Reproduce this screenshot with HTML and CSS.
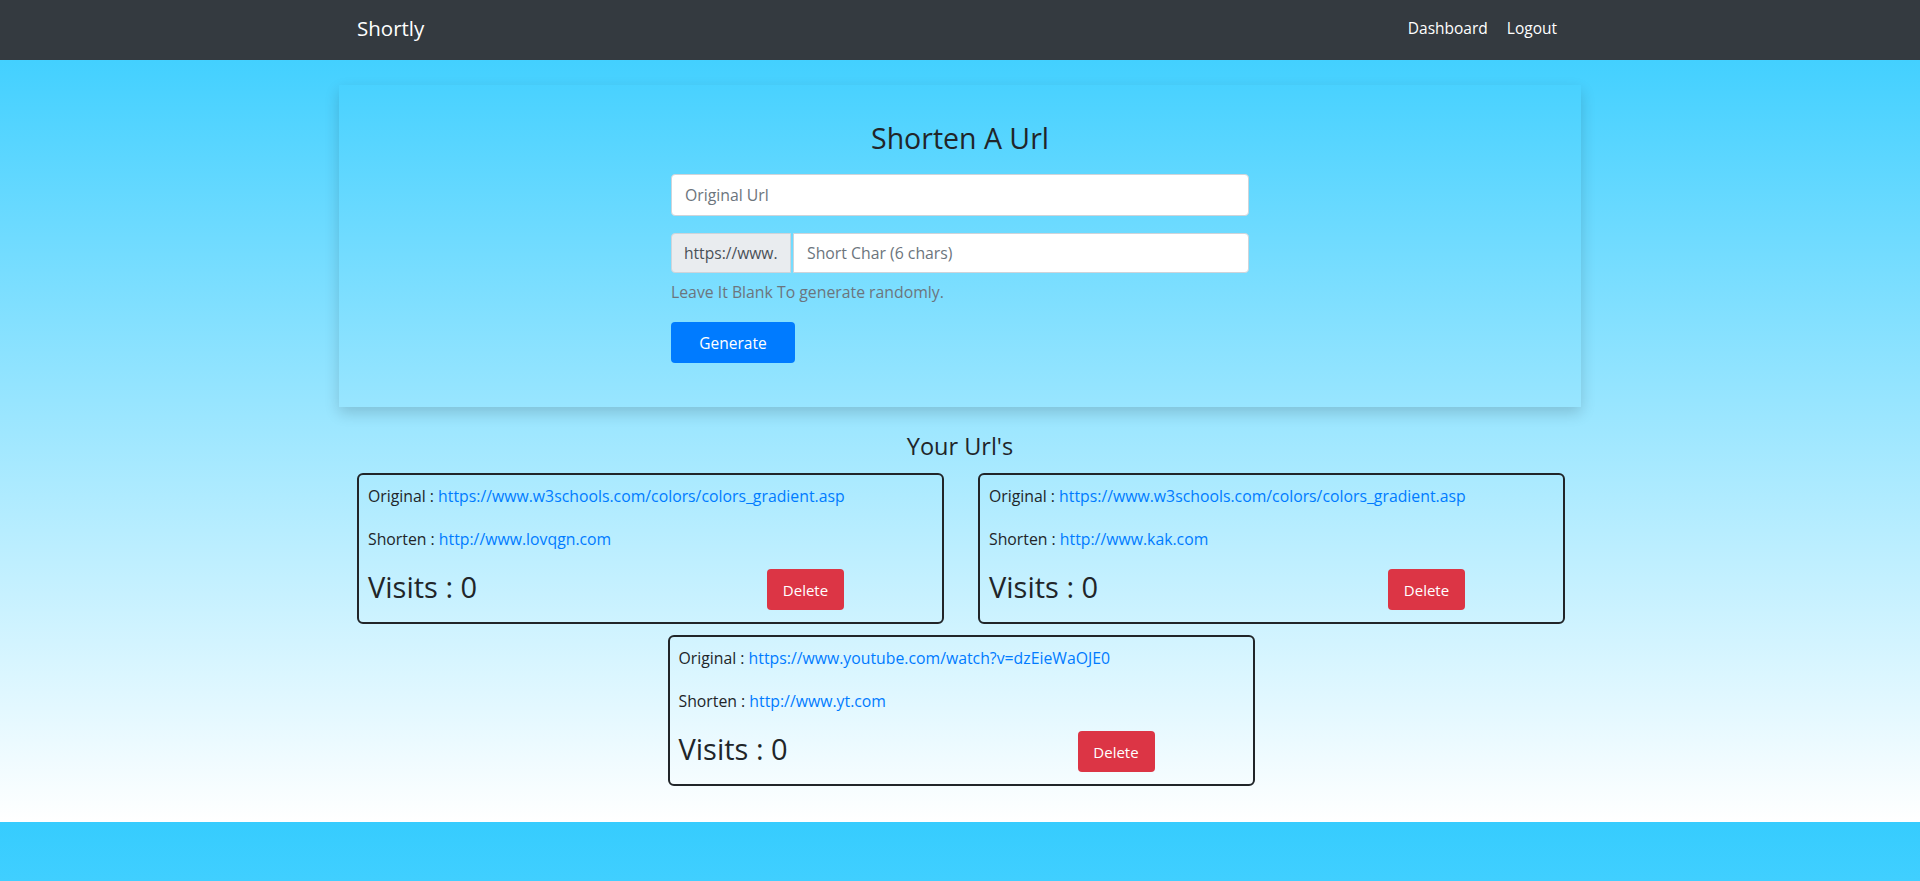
FILE: index.html
```html
<!DOCTYPE html>
<html lang="en">
<head>
<meta charset="utf-8">
<title>Shortly</title>
<link rel="stylesheet" href="styles.css">
</head>
<body>
<nav class="navbar">
  <div class="nav-inner">
    <a class="brand" href="#">Shortly</a>
    <div class="nav-links">
      <a class="nav-link" href="#">Dashboard</a>
      <a class="nav-link" href="#">Logout</a>
    </div>
  </div>
</nav>
<main class="main">
  <section class="form-card">
    <h3 class="form-title">Shorten A Url</h3>
    <form class="form">
      <input class="input" type="text" placeholder="Original Url">
      <div class="input-group">
        <span class="prefix">https://www.</span>
        <input class="input input-short" type="text" placeholder="Short Char (6 chars)">
      </div>
      <small class="help">Leave It Blank To generate randomly.</small>
      <button class="btn btn-primary" type="button">Generate</button>
    </form>
  </section>

  <h4 class="list-title">Your Url's</h4>
  <div class="url-list">
    <div class="url-card">
      <p class="line">Original : <a href="#">https://www.w3schools.com/colors/colors_gradient.asp</a></p>
      <p class="line">Shorten : <a href="#">http://www.lovqgn.com</a></p>
      <div class="bottom-row">
        <div class="visits">Visits : 0</div>
        <button class="btn btn-danger" type="button">Delete</button>
      </div>
    </div>
    <div class="url-card">
      <p class="line">Original : <a href="#">https://www.w3schools.com/colors/colors_gradient.asp</a></p>
      <p class="line">Shorten : <a href="#">http://www.kak.com</a></p>
      <div class="bottom-row">
        <div class="visits">Visits : 0</div>
        <button class="btn btn-danger" type="button">Delete</button>
      </div>
    </div>
    <div class="url-card">
      <p class="line">Original : <a href="#">https://www.youtube.com/watch?v=dzEieWaOJE0</a></p>
      <p class="line">Shorten : <a href="#">http://www.yt.com</a></p>
      <div class="bottom-row">
        <div class="visits">Visits : 0</div>
        <button class="btn btn-danger" type="button">Delete</button>
      </div>
    </div>
  </div>
</main>
<footer class="footer"></footer>
</body>
</html>
```

FILE: styles.css
```css
* { box-sizing: border-box; }

html, body {
  margin: 0;
  padding: 0;
}

body {
  font-family: "Open Sans", Lato, sans-serif;
  color: #212529;
  background: #37cdff;
}

a { text-decoration: none; }

.navbar {
  height: 60px;
  background: #343a40;
}

.nav-inner {
  width: 1200px;
  height: 60px;
  margin: 0 auto;
  display: flex;
  align-items: center;
  justify-content: space-between;
  position: relative;
  left: -3px;
}

.brand {
  font-size: 20.5px;
  color: #fff;
  margin-top: -4px;
}

.nav-links {
  display: flex;
  gap: 19px;
  margin-top: -4px;
}

.nav-link {
  font-size: 15.5px;
  color: #fff;
}

.main {
  background: linear-gradient(to bottom, #43d0ff 0%, #ffffff 100%);
  padding: 25px 0 36px;
  min-height: 762px;
}

.form-card {
  width: 1242px;
  height: 322px;
  margin: 0 auto;
  padding-top: 36px;
  box-shadow: 0 6px 14px rgba(0, 0, 0, 0.16);
  display: flex;
  flex-direction: column;
  align-items: center;
}

.form-title {
  margin: 0 0 19px;
  font-size: 28.5px;
  line-height: 34px;
  font-weight: 400;
}

.form {
  width: 578px;
  display: flex;
  flex-direction: column;
  align-items: flex-start;
}

.input {
  width: 100%;
  height: 42px;
  border: 1px solid #ced4da;
  border-radius: 4px;
  background: #fff;
  padding: 0 13px;
  font-family: inherit;
  font-size: 15.8px;
  color: #495057;
  margin-bottom: 17px;
}

.input::placeholder { color: #6c757d; }

.input-group {
  display: flex;
  width: 100%;
  height: 40px;
  gap: 2px;
}

.prefix {
  width: 120px;
  flex: none;
  display: flex;
  align-items: center;
  padding: 0 12px;
  background: #e9ecef;
  border: 1px solid #ced4da;
  border-radius: 4px 0 0 4px;
  font-size: 15.6px;
  color: #495057;
  white-space: nowrap;
}

.input-short {
  flex: 1;
  height: 40px;
  margin: 0;
  border-radius: 0 4px 4px 0;
}

.help {
  margin-top: 8px;
  font-size: 15.8px;
  line-height: 22px;
  color: #6c757d;
}

.btn {
  border: none;
  border-radius: 4px;
  font-family: inherit;
  font-size: 15px;
  color: #fff;
  height: 41px;
  cursor: pointer;
}

.btn-primary {
  margin-top: 19px;
  width: 124px;
  font-size: 15.5px;
  background: #007bff;
}

.btn-danger {
  width: 77px;
  background: #dc3545;
}

.list-title {
  margin: 25px 0 12px;
  text-align: center;
  font-size: 23.5px;
  line-height: 29px;
  font-weight: 400;
}

.url-list {
  width: 1208px;
  margin: 0 auto;
  display: flex;
  flex-wrap: wrap;
  justify-content: center;
  column-gap: 34px;
  row-gap: 11px;
  position: relative;
  left: 1px;
}

.url-card {
  width: 587px;
  height: 151px;
  border: 2px solid #212529;
  border-radius: 6px;
  padding: 8px 8px 12px 9px;
}

.line {
  margin: 0 0 17px;
  font-size: 15.8px;
  line-height: 26px;
}

.line a { color: #007bff; }

.bottom-row {
  display: flex;
  align-items: center;
}

.visits {
  width: 399px;
  font-size: 29px;
  line-height: 34px;
  margin-top: -6px;
}

.footer {
  height: 59px;
  background: linear-gradient(to bottom, #36ccfe, #40cfff);
}
```
